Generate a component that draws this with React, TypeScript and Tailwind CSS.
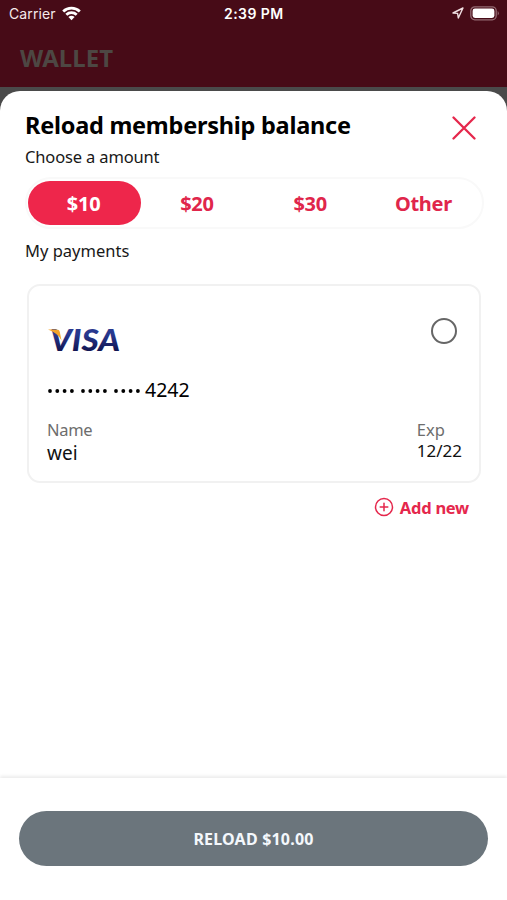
import React from "react";

const amounts = ["$10", "$20", "$30", "Other"];

function StatusBar() {
  return (
    <div className="relative flex h-[28px] items-center justify-between pl-[9px] pr-[7px] font-['Inter',sans-serif] text-white">
      <div className="flex items-center gap-[6px]">
        <span className="text-[14px] leading-[28px] tracking-[0.1px] text-[#f6e9eb]">Carrier</span>
        <svg className="-mt-[2px]" width="19" height="15" viewBox="0 0 19 15" fill="none" stroke="white" strokeWidth="2.8">
          <path d="M1.2 5.4a12 12 0 0 1 16.6 0" />
          <path d="M4.3 8.7a7.6 7.6 0 0 1 10.4 0" />
          <path d="M9.5 14.2 6.4 11.1a4.5 4.5 0 0 1 6.2 0z" fill="white" stroke="none" />
        </svg>
      </div>
      <span className="absolute left-[224px] text-[14px] font-semibold leading-[28px] tracking-[0.45px]">2:39 PM</span>
      <div className="-mt-[2px] flex items-center gap-[6px]">
        <svg width="12" height="12" viewBox="0 0 12 12" fill="none" stroke="#f0dfe2" strokeWidth="1.4" strokeLinejoin="round">
          <path d="M1 6 11 1 6.3 11 5.600 6.400z" />
        </svg>
        <svg width="30" height="15" viewBox="0 0 30 15" fill="none">
          <rect x="0.8" y="0.8" width="25.4" height="13" rx="4" stroke="#946b73" strokeWidth="1.3" />
          <rect x="2.6" y="2.6" width="21.8" height="9.4" rx="2.4" fill="white" />
          <path d="M27.7 5a3 3 0 0 1 0 4.6z" fill="#946b73" />
        </svg>
      </div>
    </div>
  );
}

function VisaLogo() {
  return (
    <svg width="82" height="46" viewBox="0 -10 82 46" className="-my-[10px] block" aria-label="Visa">
      <defs>
        <linearGradient id="visaBlue" x1="0" y1="0" x2="0" y2="1">
          <stop offset="0.35" stopColor="#28398f" />
          <stop offset="0.85" stopColor="#11144f" />
        </linearGradient>
      </defs>
      <text
        x="3"
        y="25"
        textLength="70"
        lengthAdjust="spacingAndGlyphs"
        fill="url(#visaBlue)"
        className="font-['Lato',sans-serif] text-[29.500px] font-black italic"
      >
        VISA
      </text>
      <path d="M1 3.500h8.300c2.200 0 3.100.7 3.500 2.400l1.700 8.600C12 9.500 7.500 5.800 1 3.500z" fill="#f3a32b" />
    </svg>
  );
}

export default function App() {
  return (
    <div className="flex h-[900px] w-[507px] flex-col overflow-hidden bg-[#4a4a4a] font-['Noto_Sans',sans-serif]">
      <header className="h-[87px] shrink-0 bg-[#470b17]">
        <StatusBar />
        <h1 className="pl-[20px] pt-[14px] text-[24px] font-bold leading-[32px] text-[#4d4743]">WALLET</h1>
      </header>

      <main className="mt-[4px] flex flex-1 flex-col rounded-t-[20px] bg-white">
        <div className="flex h-[52px] items-start justify-between pl-[25px] pr-[31px] pt-[18px]">
          <h2 className="whitespace-nowrap text-[23.5px] font-bold leading-[32px] tracking-[-0.25px] text-black">Reload membership balance</h2>
          <svg className="mt-[7px]" width="24" height="24" viewBox="0 0 24 24" fill="none" stroke="#e5274c" strokeWidth="2.3" strokeLinecap="round">
            <path d="M1.500 1.500 22.500 22.500M22.500 1.500 1.500 22.500" />
          </svg>
        </div>
        <p className="mt-[2px] pl-[25px] text-[16.500px] leading-[24px] tracking-[-0.15px] text-[#181818]">Choose a amount</p>

        <div className="ml-[25px] mt-[8px] grid h-[52px] w-[459px] shrink-0 grid-cols-4 rounded-full border-2 border-[#f9f9f9] px-px pt-[2px]">
          {amounts.map((amount, i) => (
            <button
              key={amount}
              className={
                i === 0
                  ? "h-[44px] rounded-full bg-[#ee264b] pr-[2px] text-[20px] font-bold leading-[46px] tracking-[-0.2px] text-white"
                  : "h-[44px] rounded-full pr-[2px] text-[20px] font-bold leading-[46px] tracking-[-0.3px] text-[#e0264b]"
              }
            >
              {amount}
            </button>
          ))}
        </div>

        <p className="mt-[10px] pl-[25px] text-[16.500px] leading-[24px] text-[#181818]">My payments</p>

        <section className="ml-[27px] mt-[21px] flex h-[199px] w-[454px] shrink-0 flex-col rounded-[13px] border-2 border-[#f1f1f1] pl-[18px] pr-[17px]">
          <div className="flex h-[66px] items-start justify-between pt-[32px]">
            <div className="pt-[8px]">
              <VisaLogo />
            </div>
            <div className="mr-[5px] h-[26px] w-[26px] rounded-full border-2 border-[#666]" />
          </div>
          <div className="mt-[24px] flex h-[28px] items-center text-black">
            <div className="flex gap-[7px] pl-[1px] pt-[2px]">
              {[0, 1, 2].map((group) => (
                <svg key={group} width="26" height="4" viewBox="0 0 26 4">
                  <circle cx="2" cy="2" r="1.900" />
                  <circle cx="9.300" cy="2" r="1.900" />
                  <circle cx="16.600" cy="2" r="1.900" />
                  <circle cx="23.900" cy="2" r="1.900" />
                </svg>
              ))}
            </div>
            <span className="ml-[5px] text-[19.500px] leading-[28px]">4242</span>
          </div>
          <div className="mt-[14px] flex justify-between">
            <div>
              <p className="text-[16.500px] leading-[24px] tracking-[-0.3px] text-[#6d6d6d]">Name</p>
              <p className="text-[19px] leading-[22px] text-[#111]">wei</p>
            </div>
            <div>
              <p className="text-[16.500px] leading-[24px] text-[#6d6d6d]">Exp</p>
              <p className="text-[17px] leading-[18px] text-[#111]">12/22</p>
            </div>
          </div>
        </section>

        <button className="mr-[38px] mt-[12px] flex items-center gap-[6px] self-end text-[#e5274c]">
          <svg className="-mt-[2px]" width="20" height="20" viewBox="0 0 20 20" fill="none" stroke="currentColor" strokeWidth="1.5" strokeLinecap="round">
            <circle cx="10" cy="10" r="8.500" />
            <path d="M10 6.200v7.600M6.200 10h7.600" />
          </svg>
          <span className="pt-px text-[16.500px] font-bold leading-[24px] tracking-[-0.25px]">Add new</span>
        </button>

        <footer className="mt-auto h-[122px] shrink-0 bg-white px-[19px] pt-[33px] shadow-[0_-2px_3px_rgba(0,0,0,0.08)]">
          <button className="h-[55px] w-full rounded-full bg-[#6b757c] pt-px text-[16px] font-bold tracking-[0.2px] text-[#f4f8fc]">RELOAD $10.00</button>
        </footer>
      </main>
    </div>
  );
}
